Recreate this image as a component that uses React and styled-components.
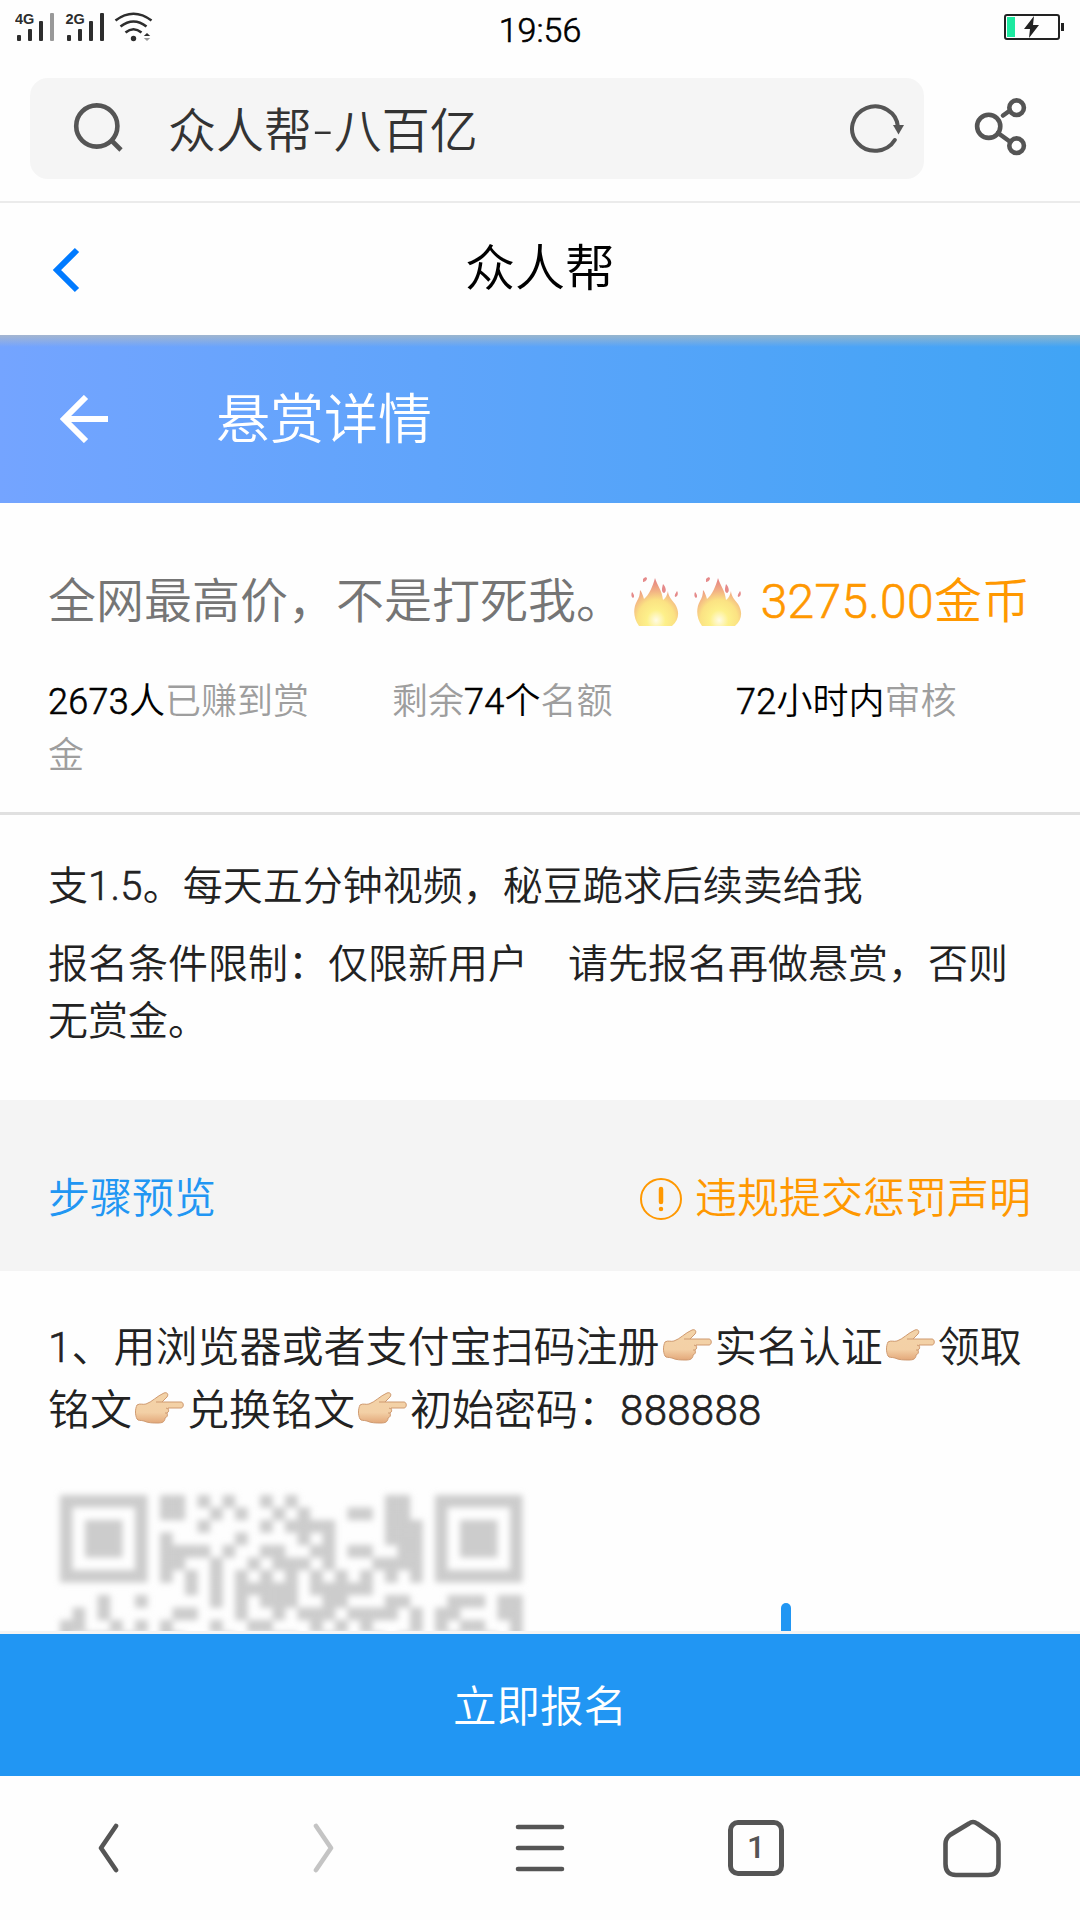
import styled, { createGlobalStyle, css } from "styled-components";

const GlobalStyle = createGlobalStyle`
  * {
    box-sizing: border-box;
  }
  body {
    margin: 0;
    background: #fff;
    font-family: Roboto, "Noto Sans CJK SC", sans-serif;
    font-weight: 350;
    color: #222;
  }
  svg {
    display: block;
    flex: none;
  }
`;

const Phone = styled.div`
  display: flex;
  flex-direction: column;
  width: 1080px;
  height: 1920px;
  overflow: hidden;
  background: #fefefe;
`;

const StatusBar = styled.header`
  display: grid;
  grid-template-columns: 1fr auto 1fr;
  align-items: center;
  height: 58px;
  padding: 0 15px 4px;
`;

const Clock = styled.time`
  padding-top: 6px;
  font-size: 34px;
  line-height: 40px;
  color: #000;
  -webkit-text-stroke: 0.6px;
`;

const StatusRight = styled.div`
  display: flex;
  justify-content: flex-end;
`;

const BrowserBar = styled.div`
  display: flex;
  align-items: center;
  height: 145px;
  padding: 0 52px 3px 30px;
  border-bottom: 2px solid #ebebeb;
`;

const SearchBox = styled.div`
  display: flex;
  align-items: center;
  width: 894px;
  height: 101px;
  padding: 0 19px 3px 43px;
  border-radius: 18px;
  background: #f5f5f5;
`;

const SearchText = styled.span`
  flex: 1;
  margin-left: 43px;
  padding-top: 10px;
  font-size: 48px;
  line-height: 60px;
  color: #333;
`;

const Dash = styled.span`
  display: inline-block;
  margin: 0 4px;
  transform: scaleX(1.4);
`;

const ShareButton = styled.div`
  margin-left: auto;
  padding-bottom: 3px;
`;

const TitleBar = styled.div`
  display: grid;
  grid-template-columns: 1fr auto 1fr;
  align-items: center;
  height: 132px;
  padding: 2px 50px 0;
`;

const Title = styled.h1`
  margin: 0;
  padding-bottom: 3px;
  font-size: 50px;
  line-height: 60px;
  font-weight: 350;
  color: #000;
`;

const DetailHeader = styled.div`
  display: flex;
  align-items: center;
  gap: 108px;
  height: 168px;
  padding: 0 60px;
  background:
    linear-gradient(rgba(205, 196, 170, 0.55), rgba(205, 196, 170, 0) 12px),
    linear-gradient(90deg, #74a4ff, #40a4f5);
  color: #fff;
`;

const DetailTitle = styled.h2`
  margin: 0;
  padding-top: 3px;
  font-size: 54px;
  line-height: 64px;
  font-weight: 350;
`;

const Summary = styled.section`
  height: 312px;
  padding: 69px 50px 0 48px;
  border-bottom: 3px solid #e0e0e0;
`;

const Headline = styled.div`
  display: flex;
  align-items: center;
  justify-content: space-between;
  height: 60px;
  font-size: 48px;
  line-height: 60px;
  color: #757575;
  white-space: nowrap;
`;

const Fires = styled.span`
  display: flex;
  gap: 15px;
  margin: 0 16px 0 4px;
`;

const Price = styled.span`
  color: #ff9800;
`;

const Stats = styled.div`
  display: grid;
  grid-template-columns: repeat(3, 292px);
  gap: 52px;
  margin-top: 43px;
  font-size: 36px;
  line-height: 54px;
  color: #9e9e9e;
`;

const Strong = styled.span`
  color: #000;
`;

/* Roboto's light cut is thinner than the CJK face beside it */
const Digits = styled.span`
  letter-spacing: 0.3px;
  -webkit-text-stroke: 0.6px;
`;

const Description = styled.section`
  height: 285px;
  padding: 43px 40px 0 48px;
  font-size: 40px;
  line-height: 57px;
`;

const Paragraph = styled.p`
  margin: 0 0 21px;
  white-space: nowrap;
`;

const StepsBar = styled.div`
  display: flex;
  align-items: center;
  justify-content: space-between;
  height: 171px;
  padding: 26px 49px 0 48px;
  background: #f4f4f4;
  font-size: 42px;
  line-height: 50px;
`;

const StepsTitle = styled.span`
  color: #2196f3;
`;

const Notice = styled.span`
  display: flex;
  align-items: center;
  gap: 13px;
  color: #ff9800;
`;

const StepBody = styled.section`
  flex: 1;
  min-height: 0;
  overflow: hidden;
  padding: 45px 40px 0 48px;
  font-size: 42px;
  line-height: 63px;
  border-bottom: 3px solid #f4f4f4;
`;

const StepLine = styled.div`
  display: flex;
  align-items: center;
  height: 63px;
  white-space: nowrap;
`;

const Media = styled.div`
  display: flex;
  align-items: flex-start;
  margin-top: 45px;
  padding-left: 4px;
`;

const UploadMark = styled.div`
  width: 10px;
  height: 120px;
  margin: 116px 0 0 251px;
  border-radius: 5px;
  background: #2196f3;
`;

const SignUp = styled.button`
  all: unset;
  height: 142px;
  padding-top: 3px;
  box-sizing: border-box;
  line-height: 142px;
  text-align: center;
  font-size: 43.5px;
  background: #2196f3;
  color: #fff;
`;

const BottomNav = styled.nav`
  display: grid;
  grid-template-columns: repeat(5, 1fr);
  height: 144px;
`;

const NavItem = styled.div`
  display: flex;
  align-items: center;
  justify-content: center;
  color: #555;
  ${(props) =>
    props.$disabled &&
    css`
      color: #c4c4c4;
    `}
`;

const TabCount = styled.span`
  display: flex;
  align-items: center;
  justify-content: center;
  width: 56px;
  height: 56px;
  padding-bottom: 2px;
  border: 5px solid #555;
  border-radius: 10px;
  font-size: 32px;
  font-weight: 500;
  line-height: 1;
`;

const qrRows = [
  [8, 9, 11, 13, 16, 18, 26, 27],
  [8, 9, 12, 14, 17, 19, 23, 24, 26, 27],
  [11, 16, 18, 19, 20, 21, 26, 27, 28],
  [8, 14, 19, 21, 26, 27, 28],
  [8, 9, 10, 11, 13, 16, 17, 20, 21, 23, 24, 27, 28],
  [8, 9, 12, 15, 17, 18, 19, 21, 25, 26, 27, 28],
  [8, 10, 12, 14, 16, 18, 20, 22, 24, 26, 28],
  [10, 12, 14, 15, 16, 17, 18, 20, 21, 22, 23, 24],
  [3, 6, 12, 14, 16, 17, 18, 21, 22, 26, 27, 31, 32, 33, 35, 36],
  [1, 3, 9, 10, 14, 17, 19, 20, 21, 23, 24, 25, 26, 28, 30, 31, 35, 36],
  [0, 1, 4, 6, 8, 12, 15, 16, 20, 22, 24, 28, 30, 32, 33, 36],
  [0, 2, 3, 5, 8, 9, 13, 17, 18, 21, 25, 27, 31, 34, 36],
];

const Finder = ({ x }) => (
  <>
    <rect x={x + 0.5} y="0.5" width="6" height="6" fill="none" stroke="#ccc" />
    <rect x={x + 2} y="2" width="3" height="3" />
  </>
);

const QrCode = () => (
  <svg width="478" height="170" viewBox="-0.64 -0.64 38.24 13.6">
    <defs>
      <filter id="soft" x="-5%" y="-5%" width="110%" height="110%">
        <feGaussianBlur stdDeviation="0.25" />
      </filter>
    </defs>
    <g fill="#ccc" filter="url(#soft)">
      <Finder x={0} />
      <Finder x={30} />
      {qrRows.map((row, y) =>
        row.map((x) => (
          <rect key={`${x}-${y}`} x={x} y={y} width="1.02" height="1.02" />
        ))
      )}
    </g>
  </svg>
);

const SignalIcons = () => (
  <svg width="138" height="30" viewBox="15 12 138 30" fill="#2d2d2d">
    <g fontFamily="Liberation Sans, sans-serif" fontSize="14.5" fontWeight="700">
      <text x="15" y="24">4G</text>
      <text x="65.5" y="24">2G</text>
    </g>
    {[17, 67].map((x) => (
      <g key={x}>
        <rect x={x} y="35" width="4" height="6" rx="1" />
        <rect x={x + 11} y="29" width="4" height="12" rx="1" />
        <rect x={x + 22} y="21" width="4" height="20" rx="1" />
      </g>
    ))}
    <rect x="50" y="13" width="4" height="28" rx="1" fill="#999" />
    <rect x="100" y="13" width="4" height="28" rx="1" />
    <g fill="none" stroke="#2d2d2d" strokeWidth="2.6">
      <path d="M115.5 20.5Q133.5 7 151.5 20.5" />
      <path d="M120.5 26.5Q133.5 16.5 146.5 26.5" />
      <path d="M125.5 32.5Q133.5 26 141.5 32.5" />
    </g>
    <circle cx="133.5" cy="38.5" r="2.7" />
    <path d="M147 33l3.2 3h-6.4z" />
    <path d="M147 41l3.2-3h-6.4z" fill="#999" />
  </svg>
);

const Battery = () => (
  <svg width="61" height="28" viewBox="1004 13 61 28">
    <rect x="1005" y="15" width="54" height="24" rx="2" fill="none" stroke="#222" strokeWidth="2" />
    <rect x="1061" y="23" width="3" height="8" fill="#222" />
    <rect x="1007" y="17" width="8" height="20" fill="#1de9a0" />
    <path d="M1034 16l-10 13h6l-1 9 10-13h-6z" fill="#222" />
  </svg>
);

const SearchIcon = () => (
  <svg width="52" height="52" viewBox="73 101 52 52" fill="none" stroke="#555" strokeWidth="4.6">
    <circle cx="96.8" cy="126" r="20.6" />
    <path d="M111.5 140.5l9.5 9.5" />
  </svg>
);

const ReloadIcon = () => (
  <svg width="56" height="54" viewBox="849 101 56 54" fill="none" stroke="#555" strokeWidth="4">
    <path d="M894.8 141A23 22.2 0 1 1 898 128" strokeLinecap="round" />
    <path d="M893 126h11l-5.5 9.5z" fill="#555" stroke="none" />
  </svg>
);

const ShareIcon = () => (
  <svg width="54" height="60" viewBox="974 97 54 60" fill="none" stroke="#555" strokeWidth="4.6">
    <circle cx="988.7" cy="126.3" r="11.6" />
    <circle cx="1016.6" cy="107.7" r="7.3" />
    <circle cx="1016.6" cy="145.7" r="7.3" />
    <path d="M1003 115.5l7-5M998 133l12.5 9" strokeLinecap="round" />
  </svg>
);

const FireIcon = () => (
  <svg width="48" height="50" viewBox="0 0 48 50">
    <defs>
      <radialGradient id="flame" cx="50%" cy="88%" r="85%">
        <stop offset="0" stopColor="#fffbe6" />
        <stop offset="0.25" stopColor="#fdf08a" />
        <stop offset="0.5" stopColor="#fbe283" />
        <stop offset="0.72" stopColor="#f2b184" />
        <stop offset="1" stopColor="#e58282" />
      </radialGradient>
    </defs>
    <path
      d="M8 49C2 41 2 31 6 24c2-3 3-7 3-11 2 2 3 6 4 9C18 18 22 9 24 1c2 7 7 12 8 22 3-2 4-5 5-9 0 5 4 9 7 13 5 8 4 16-3 22z"
      fill="url(#flame)"
    />
    <g fill="#e58a8a">
      <path d="M12 2c2-2 3-2 4-1 0 3-3 4-4 4zM32 7c3 3 4 8 1 9-3-1-2-5-1-9zM1 15c2 2 3 5 1 6-2-1-2-4-1-6zM46 14c2 3 0 6-2 6-1-2 1-4 2-6z" />
    </g>
  </svg>
);

const HandSvg = styled.svg`
  margin: 0 3px 5px 3px;
`;

const Hand = () => (
  <HandSvg width="49" height="32" viewBox="0 0 49 32">
    <defs>
      <linearGradient id="skin" x1="0" y1="0" x2="0" y2="1">
        <stop offset="0" stopColor="#f3d3a8" />
        <stop offset="0.65" stopColor="#f3d0a6" />
        <stop offset="1" stopColor="#e3a87a" />
      </linearGradient>
    </defs>
    <path
      d="M2 13c3-2 6 0 9-1C17 10 22 4 29 1c3-1 5 1 3 4l-5 5h19c3 0 3 6 0 6H33c1 2 1 4-1 5 1 3 0 4-2 5 0 4-3 5-7 5-5 0-10 0-14-2-3-1-6 0-7-2C0 23 0 17 2 13z"
      fill="url(#skin)"
      stroke="#cf9a70"
      strokeWidth="1"
    />
    <path d="M21 10l6 0M31 16l2 1M30 21l2 0" fill="none" stroke="#cf9a70" />
  </HandSvg>
);

const App = () => {
  return (
    <>
      <GlobalStyle />
      <Phone>
        <StatusBar>
          <SignalIcons />
          <Clock>19:56</Clock>
          <StatusRight>
            <Battery />
          </StatusRight>
        </StatusBar>

        <BrowserBar>
          <SearchBox>
            <SearchIcon />
            <SearchText>
              众人帮<Dash>-</Dash>八百亿
            </SearchText>
            <ReloadIcon />
          </SearchBox>
          <ShareButton>
            <ShareIcon />
          </ShareButton>
        </BrowserBar>

        <TitleBar>
          <svg width="32" height="46" viewBox="0 0 32 46" fill="none" stroke="#007aff" strokeWidth="6">
            <path d="M27 3L7 23l20 20" />
          </svg>
          <Title>众人帮</Title>
        </TitleBar>

        <DetailHeader>
          <svg width="48" height="48" viewBox="0 0 48 48" fill="none" stroke="#fff" strokeWidth="6">
            <path d="M26 2L4 24l22 22M4 24h44" />
          </svg>
          <DetailTitle>悬赏详情</DetailTitle>
        </DetailHeader>

        <Summary>
          <Headline>
            <span>全网最高价，不是打死我。</span>
            <Fires>
              <FireIcon />
              <FireIcon />
            </Fires>
            <Price>
              <Digits>3275.00</Digits>金币
            </Price>
          </Headline>
          <Stats>
            <div>
              <Strong>
                <Digits>2673</Digits>人
              </Strong>
              已赚到赏
              <br />金
            </div>
            <div>
              剩余
              <Strong>
                <Digits>74</Digits>个
              </Strong>
              名额
            </div>
            <div>
              <Strong>
                <Digits>72</Digits>小时内
              </Strong>
              审核
            </div>
          </Stats>
        </Summary>

        <Description>
          <Paragraph>
            支<Digits>1.5</Digits>。每天五分钟视频，秘豆跪求后续卖给我
          </Paragraph>
          <Paragraph>
            报名条件限制：仅限新用户　请先报名再做悬赏，否则
            <br />
            无赏金。
          </Paragraph>
        </Description>

        <StepsBar>
          <StepsTitle>步骤预览</StepsTitle>
          <Notice>
            <svg width="42" height="42" viewBox="0 0 42 42" fill="none" stroke="#ff9800">
              <circle cx="21" cy="21" r="20" strokeWidth="2" />
              <path d="M21 11v13M21 31v.1" strokeWidth="4.5" strokeLinecap="round" />
            </svg>
            违规提交惩罚声明
          </Notice>
        </StepsBar>

        <StepBody>
          <StepLine>
            <Digits>1</Digits>、用浏览器或者支付宝扫码注册
            <Hand />
            实名认证
            <Hand />
            领取
          </StepLine>
          <StepLine>
            铭文
            <Hand />
            兑换铭文
            <Hand />
            初始密码：<Digits>888888</Digits>
          </StepLine>
          <Media>
            <QrCode />
            <UploadMark />
          </Media>
        </StepBody>

        <SignUp>立即报名</SignUp>

        <BottomNav>
          <NavItem>
            <svg width="24" height="50" viewBox="0 0 24 50" fill="none" stroke="currentColor" strokeWidth="4.6" strokeLinecap="round" strokeLinejoin="round">
              <path d="M20 3L5 25l15 22" />
            </svg>
          </NavItem>
          <NavItem $disabled>
            <svg width="24" height="50" viewBox="0 0 24 50" fill="none" stroke="currentColor" strokeWidth="4.6" strokeLinecap="round" strokeLinejoin="round">
              <path d="M4 3l15 22L4 47" />
            </svg>
          </NavItem>
          <NavItem>
            <svg width="50" height="50" viewBox="0 0 50 50" stroke="currentColor" strokeWidth="4.6" strokeLinecap="round">
              <path d="M3 4h44M3 25h44M3 46h44" />
            </svg>
          </NavItem>
          <NavItem>
            <TabCount>1</TabCount>
          </NavItem>
          <NavItem>
            <svg width="58" height="60" viewBox="0 0 58 60" fill="none" stroke="currentColor" strokeWidth="4.6">
              <path d="M26 5.5Q30 2.5 34 5.5L51 17Q55.5 20.5 55.5 26V46Q55.5 57 45 57H13Q2.5 57 2.5 46V26Q2.5 20.5 7 17z" />
            </svg>
          </NavItem>
        </BottomNav>
      </Phone>
    </>
  );
};

export default App;
